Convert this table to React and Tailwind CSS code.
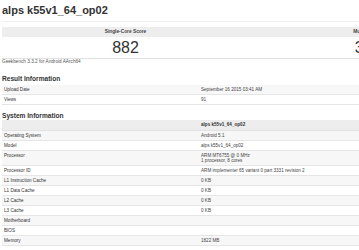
import React from "react";

const resultRows = [
  ["Upload Date", "September 16 2015 03:41 AM"],
  ["Views", "91"],
];

const systemRows = [
  ["Operating System", "Android 5.1"],
  ["Model", "alps k55v1_64_op02"],
  ["Processor", ["ARM MT6755 @ 0 MHz", "1 processor, 8 cores"]],
  ["Processor ID", "ARM implementer 65 variant 0 part 3331 revision 2"],
  ["L1 Instruction Cache", "0 KB"],
  ["L1 Data Cache", "0 KB"],
  ["L2 Cache", "0 KB"],
  ["L3 Cache", "0 KB"],
  ["Motherboard", ""],
  ["BIOS", ""],
  ["Memory", "1822 MB"],
];

function InfoRow({ label, value, striped }) {
  const lines = Array.isArray(value) ? value : [value];
  return (
    <div
      className={`grid grid-cols-[196px_1fr] border-b border-[#e6e6e6] text-[4.6px] leading-[5px] ${
        striped ? "bg-[#f7f7f7]" : "bg-white"
      }`}
    >
      <div className="px-[2px] py-[2px] text-[#333]">{label}</div>
      <div className="px-[3px] py-[2px] text-[#444]">
        {lines.map((line, i) => (
          <div key={i} className="min-h-[5px]">
            {line}
          </div>
        ))}
      </div>
    </div>
  );
}

function SectionTitle({ children, className = "" }) {
  return <h2 className={`text-[6.6px] leading-[8px] font-bold text-[#333] ${className}`}>{children}</h2>;
}

export default function App() {
  return (
    <div className="h-[250px] w-[359px] overflow-hidden bg-white font-['Liberation_Sans',Arial,sans-serif] text-[#333]">
      <div className="ml-[2px] w-[494px]">
        <h1 className="border-b border-[#eee] pt-[4px] pb-[4px] text-[11px] leading-[13px] font-bold text-[#333]">
          alps k55v1_64_op02
        </h1>

        <div className="mt-[5px] grid grid-cols-2 border-b border-[#e2e2e2]">
          <div className="h-[10px] bg-[#ededed] text-center text-[4.8px] leading-[10px] font-bold text-[#444]">
            Single-Core Score
          </div>
          <div className="h-[10px] bg-[#ededed] text-center text-[4.8px] leading-[10px] font-bold text-[#444]">
            Multi-Core Score
          </div>
          <div className="h-[21px] text-center text-[16px] leading-[21px] text-[#333]">882</div>
          <div className="h-[21px] text-center text-[16px] leading-[21px] text-[#333]">3013</div>
        </div>

        <p className="text-[4.7px] leading-[6px] text-[#555]">Geekbench 3.3.2 for Android AArch64</p>

        <SectionTitle className="mt-[10px] mb-[1.5px]">Result Information</SectionTitle>
        <div>
          {resultRows.map(([label, value], i) => (
            <InfoRow key={label} label={label} value={value} striped={i % 2 === 0} />
          ))}
        </div>

        <SectionTitle className="mt-[7.5px]">System Information</SectionTitle>
        <div>
          <div className="grid grid-cols-[196px_1fr] border-b border-[#e2e2e2] bg-[#ededed] text-[4.6px] leading-[6px] font-bold">
            <div className="px-[2px] py-[2px]"></div>
            <div className="px-[3px] py-[2px] text-[#333]">alps k55v1_64_op02</div>
          </div>
          {systemRows.map(([label, value], i) => (
            <InfoRow key={label} label={label} value={value} striped={i % 2 === 0} />
          ))}
        </div>
      </div>
    </div>
  );
}
